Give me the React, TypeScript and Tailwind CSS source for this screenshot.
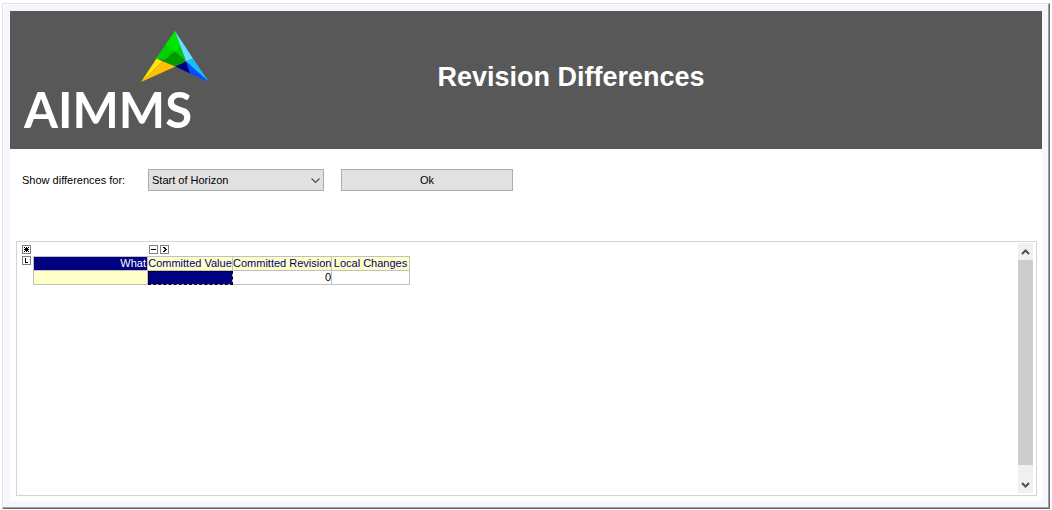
import type { ReactNode } from "react";

function Logo() {
  return (
    <div className="flex w-48 flex-col" aria-label="AIMMS">
      <svg viewBox="0 0 70 54" className="ml-[116px] h-[54px] w-[70px]" aria-hidden="true">
        <path d="M35 1 L15.500 29 L45.500 31.500 Z" fill="#00d000" />
        <path d="M35 1 L25.500 14.500 L34.500 21.500 L40.500 16.500 Z" fill="#00e600" />
        <path d="M34.500 21.500 L23 31.500 L35.500 36.500 L46.500 31 Z" fill="#009a00" />
        <path d="M16.500 28.500 L1 52 L23 31.500 Z" fill="#ffe600" />
        <path d="M23 31.500 L1 52 L35.500 36.500 Z" fill="#ffc000" />
        <path d="M35 1 L40.500 16.500 L46 31.500 L53 28.500 Z" fill="#66e0ff" />
        <path d="M53 28.500 L46 31.500 L69 52 Z" fill="#18bcff" />
        <path d="M46 31.500 L50 43.500 L69 52 Z" fill="#0050ff" />
        <path d="M46 31.500 L35.500 36.500 L50 43.500 Z" fill="#000080" />
      </svg>
      <span className="font-['Lato',sans-serif] text-[49px] leading-[50px] font-bold text-white">AIMMS</span>
    </div>
  );
}

function PivotButton({ label, children }: { label: string; children: ReactNode }) {
  return (
    <button type="button" aria-label={label} className="flex h-[9px] w-[9px] items-center justify-center border border-[#808080] bg-white">
      <svg viewBox="0 0 7 7" className="h-[7px] w-[7px] shrink-0" fill="black" shapeRendering="crispEdges">
        {children}
      </svg>
    </button>
  );
}

function DifferencesTable() {
  return (
    <table className="w-[377px] table-fixed border-collapse text-[11px] leading-[13px]">
      <colgroup>
        <col className="w-[114px]" />
        <col className="w-[85px]" />
        <col className="w-[99px]" />
        <col className="w-[78px]" />
      </colgroup>
      <thead>
        <tr className="h-[14px] bg-[#ffffc8] text-[#000080]">
          <th className="border border-[#c0c0c0] bg-[#000080] px-px py-0 text-right font-normal text-white">What</th>
          <th className="border border-[#c0c0c0] p-0 text-center font-normal whitespace-nowrap">Committed Value</th>
          <th className="border border-[#c0c0c0] p-0 text-center font-normal whitespace-nowrap">Committed Revision</th>
          <th className="border border-[#c0c0c0] p-0 text-center font-normal whitespace-nowrap">Local Changes</th>
        </tr>
      </thead>
      <tbody>
        <tr className="h-[14px]">
          <td className="border border-[#c0c0c0] bg-[#ffffc8] p-0" />
          <td className="border border-[#c0c0c0] bg-[#000080] p-0 outline-1 -outline-offset-1 outline-dashed outline-black" />
          <td className="border border-[#c0c0c0] p-0 text-right">0</td>
          <td className="border border-[#c0c0c0] p-0" />
        </tr>
      </tbody>
    </table>
  );
}

function ScrollBar() {
  return (
    <div className="flex w-[15px] flex-col bg-[#f0f0f0]">
      <button type="button" aria-label="Scroll up" className="flex h-[17px] items-center justify-center">
        <svg viewBox="0 0 9 6" className="h-1.5 w-[9px]" fill="none" stroke="#505050" strokeWidth="2">
          <path d="M1 5 L4.500 1.500 L8 5" />
        </svg>
      </button>
      <div className="flex-1">
        <div className="h-[95%] bg-[#cdcdcd]" />
      </div>
      <button type="button" aria-label="Scroll down" className="flex h-[17px] items-center justify-center">
        <svg viewBox="0 0 9 6" className="h-1.5 w-[9px]" fill="none" stroke="#505050" strokeWidth="2">
          <path d="M1 1 L4.500 4.500 L8 1" />
        </svg>
      </button>
    </div>
  );
}

export default function App() {
  return (
    <div className="flex min-h-screen flex-col bg-white pt-[3px] pr-0.5 pb-px pl-0.5 font-['Liberation_Sans',Arial,sans-serif] text-black">
      <div className="flex flex-1 flex-col border border-t-[#e3e3e3] border-r-[#696969] border-b-[#696969] border-l-[#e3e3e3] bg-[#f4f7fc] pt-[7px] pr-[7px] pb-[7px] pl-[7px] shadow-[inset_-1px_-1px_0_#a0a0a0,inset_1px_1px_0_#ffffff]">
        <div className="flex flex-1 flex-col bg-white">
          <header className="flex h-[138px] bg-[#585858] pl-3.5">
            <div className="pt-[19px]">
              <Logo />
            </div>
            <h1 className="flex-1 pt-[50px] pr-[116px] text-center text-[27px] leading-8 font-bold text-white">Revision Differences</h1>
          </header>

          <div className="flex items-center pt-5 pl-3 text-[11px]">
            <label htmlFor="scope" className="w-[126px]">
              Show differences for:
            </label>
            <div className="relative">
              <select id="scope" className="h-[22px] w-44 appearance-none border border-[#adadad] bg-[#e1e1e1] pl-[3px]">
                <option>Start of Horizon</option>
              </select>
              <svg viewBox="0 0 9 6" className="pointer-events-none absolute top-[9px] right-1 h-1.5 w-[9px]" fill="none" stroke="#505050" strokeWidth="1.2">
                <path d="M0.500 0.500 L4.500 4.500 L8.500 0.500" />
              </svg>
            </div>
            <button type="button" className="ml-[17px] h-[22px] w-[172px] border border-[#adadad] bg-[#e1e1e1]">
              Ok
            </button>
          </div>

          <main className="mt-[50px] mr-[5px] mb-[5px] ml-1.5 flex flex-1 border border-[#d4d4d4] pt-px pr-[3px] pb-0.5">
            <div className="flex-1 pt-0.5 pl-[5px]">
              <div className="flex justify-start">
                <PivotButton label="Select all">
                  <path d="M1 1h1v1h-1z M3 1h1v1h-1z M5 1h1v1h-1z M2 2h3v1h-3z M1 3h5v1h-5z M2 4h3v1h-3z M1 5h1v1h-1z M3 5h1v1h-1z M5 5h1v1h-1z" />
                </PivotButton>
                <div className="ml-[118px] flex gap-0.5">
                  <PivotButton label="Collapse">
                    <path d="M1 3h5v1h-5z" />
                  </PivotButton>
                  <PivotButton label="Expand">
                    <path d="M2 1h2v1h-2z M3 2h2v1h-2z M4 3h2v1h-2z M3 4h2v1h-2z M2 5h2v1h-2z" />
                  </PivotButton>
                </div>
              </div>
              <div className="flex gap-0.5 pt-0.5">
                <PivotButton label="Layout">
                  <path d="M2 1h1v4h2v1h-3z" />
                </PivotButton>
                <DifferencesTable />
              </div>
            </div>
            <ScrollBar />
          </main>
        </div>
      </div>
    </div>
  );
}
